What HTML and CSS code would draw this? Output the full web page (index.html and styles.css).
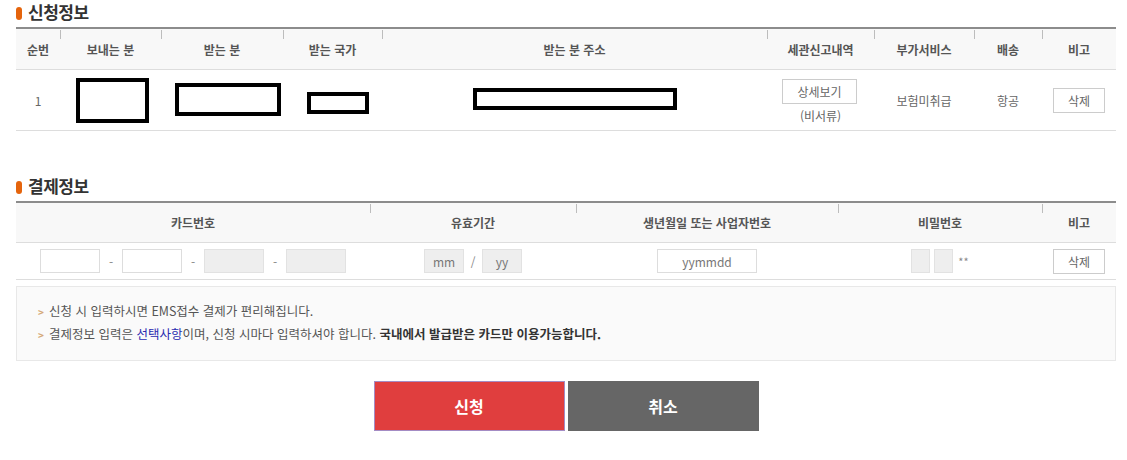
FILE: index.html
```html
<!DOCTYPE html>
<html lang="ko">
<head>
    <meta charset="utf-8">
    <title>신청정보</title>
    <link rel="stylesheet" href="styles.css">
</head>
<body>
<div class="wrap">

  <h2 class="sec-title">신청정보</h2>
  <table class="grid">
    <colgroup>
      <col style="width:44px"><col style="width:101px"><col style="width:122px"><col style="width:99px">
      <col style="width:385px"><col style="width:107px"><col style="width:100px"><col style="width:68px"><col style="width:74px">
    </colgroup>
    <thead>
      <tr>
        <th>순번</th>
        <th class="sep">보내는 분</th>
        <th class="sep">받는 분</th>
        <th class="sep">받는 국가</th>
        <th class="sep">받는 분 주소</th>
        <th class="sep">세관신고내역</th>
        <th class="sep">부가서비스</th>
        <th class="sep">배송</th>
        <th class="sep">비고</th>
      </tr>
    </thead>
    <tbody>
      <tr class="tall">
        <td>1</td>
        <td><span class="mask m1"></span></td>
        <td><span class="mask m2"></span></td>
        <td><span class="mask m3"></span></td>
        <td><span class="mask m4"></span></td>
        <td>
          <button class="btn-line btn-detail">상세보기</button>
          <div class="sub">(비서류)</div>
        </td>
        <td>보험미취급</td>
        <td>항공</td>
        <td><button class="btn-line">삭제</button></td>
      </tr>
    </tbody>
  </table>

  <h2 class="sec-title sec-gap">결제정보</h2>
  <table class="grid grid-pay">
    <colgroup>
      <col style="width:354px"><col style="width:206px"><col style="width:262px"><col style="width:204px"><col style="width:74px">
    </colgroup>
    <thead>
      <tr>
        <th>카드번호</th>
        <th class="sep">유효기간</th>
        <th class="sep">생년월일 또는 사업자번호</th>
        <th class="sep">비밀번호</th>
        <th class="sep">비고</th>
      </tr>
    </thead>
    <tbody>
      <tr class="short">
        <td>
          <div class="card-inputs">
            <input class="ipt w60" type="text">
            <span class="dash">-</span>
            <input class="ipt w60" type="text">
            <span class="dash">-</span>
            <input class="ipt w60 off" type="text" disabled>
            <span class="dash">-</span>
            <input class="ipt w60 off" type="text" disabled>
          </div>
        </td>
        <td>
          <div class="card-inputs">
            <input class="ipt w40 off" type="text" placeholder="mm" disabled>
            <span class="slash">/</span>
            <input class="ipt w40 off" type="text" placeholder="yy" disabled>
          </div>
        </td>
        <td><input class="ipt w100" type="text" placeholder="yymmdd"></td>
        <td>
          <div class="pw-inputs">
            <input class="ipt w19 off" type="password" disabled>
            <input class="ipt w19 off" type="password" disabled>
            <span class="stars">**</span>
          </div>
        </td>
        <td><button class="btn-line">삭제</button></td>
      </tr>
    </tbody>
  </table>

  <div class="notice">
    <p><span class="arr">&gt;</span>신청 시 입력하시면 EMS접수 결제가 편리해집니다.</p>
    <p><span class="arr">&gt;</span>결제정보 입력은 <span class="blue">선택사항</span>이며, 신청 시마다 입력하셔야 합니다. <strong>국내에서 발급받은 카드만 이용가능합니다.</strong></p>
  </div>

  <div class="actions">
    <button class="btn-big btn-red">신청</button>
    <button class="btn-big btn-gray">취소</button>
  </div>

</div>
</body>
</html>
```

FILE: styles.css
```css
body {
  margin: 0;
  background: #ffffff;
  color: #666666;
  font-family: "Noto Sans CJK KR", "Noto Sans", sans-serif;
  font-size: 12px;
}

.wrap {
  width: 1100px;
  margin-left: 16px;
}

.sec-title {
  margin: 0;
  height: 27px;
  line-height: 23px;
  font-size: 17px;
  font-weight: bold;
  color: #333333;
  letter-spacing: -0.5px;
}

.sec-title::before {
  content: "";
  display: inline-block;
  width: 6px;
  height: 13px;
  margin-right: 6px;
  border-radius: 3px;
  background: #e5640c;
  vertical-align: -1px;
}

.sec-gap {
  margin-top: 43px;
}

.grid {
  width: 1100px;
  table-layout: fixed;
  border-collapse: collapse;
  border-top: 2px solid #8c8c8c;
}

.grid th {
  position: relative;
  height: 40px;
  padding: 0;
  background: #f8f8f8;
  border-bottom: 1px solid #dddddd;
  color: #555555;
  font-size: 12px;
  font-weight: bold;
  text-align: center;
}

.grid-pay th {
  height: 39px;
}

.grid th.sep::before {
  content: "";
  position: absolute;
  left: 0;
  top: 1px;
  width: 1px;
  height: 9px;
  background: #bdbdbd;
}

.grid td {
  padding: 0;
  border-bottom: 1px solid #dddddd;
  text-align: center;
  color: #666666;
  font-size: 12px;
}

.tall td {
  height: 60px;
}

.short td {
  height: 36px;
}

.mask {
  display: inline-block;
  box-sizing: border-box;
  border: 4px solid #000000;
  vertical-align: middle;
}

.m1 { width: 73px; height: 45px; margin-left: 4px; }
.m2 { width: 106px; height: 33px; margin-left: 12px; margin-top: -1px; }
.m3 { width: 62px; height: 22px; margin-left: 10px; margin-top: 6px; }
.m4 { width: 204px; height: 22px; margin-top: -3px; }

.btn-line {
  height: 25px;
  padding: 0;
  width: 52px;
  background: #ffffff;
  border: 1px solid #cccccc;
  color: #666666;
  font-family: inherit;
  font-size: 12px;
  cursor: pointer;
}

.btn-detail {
  width: 75px;
  margin-top: 2px;
  margin-left: -2px;
}

.sub {
  margin-top: 4px;
  line-height: 16px;
}

.card-inputs,
.pw-inputs {
  display: flex;
  align-items: center;
  justify-content: center;
}

.ipt {
  box-sizing: border-box;
  height: 24px;
  padding: 0;
  border: 1px solid #dddddd;
  background: #ffffff;
  text-align: center;
  font-family: inherit;
  font-size: 12px;
  color: #666666;
  vertical-align: middle;
}

.ipt::placeholder {
  color: #777777;
}

.ipt.off {
  background: #eeeeee;
  border-color: #e2e2e2;
}

.w60 { width: 60px; }
.w40 { width: 40px; }
.w100 { width: 100px; }
.w19 { width: 19px; }

.dash {
  width: 22px;
  text-align: center;
  color: #888888;
}

.slash {
  width: 18px;
  text-align: center;
  color: #888888;
}

.pw-inputs {
  gap: 4px;
}

.stars {
  margin-left: 1px;
  color: #888888;
  font-size: 11px;
}

.notice {
  margin-top: 6px;
  box-sizing: border-box;
  height: 75px;
  padding: 13px 21px;
  background: #fafafa;
  border: 1px solid #e8e8e8;
  color: #555555;
  font-size: 12.5px;
}

.notice p {
  margin: 0;
  line-height: 22px;
}

.arr {
  margin-right: 5px;
  color: #d5a878;
  font-size: 10px;
  font-weight: bold;
}

.blue {
  color: #2b2bb0;
}

.notice strong {
  color: #333333;
}

.actions {
  display: flex;
  justify-content: center;
  gap: 3px;
  margin-top: 20px;
}

.btn-big {
  width: 191px;
  height: 50px;
  border: 0;
  color: #ffffff;
  font-family: inherit;
  font-size: 16px;
  font-weight: bold;
  cursor: pointer;
}

.btn-red {
  background: #e03e3e;
  border: 1px solid #a48cc4;
}

.btn-gray {
  background: #666666;
}
```
